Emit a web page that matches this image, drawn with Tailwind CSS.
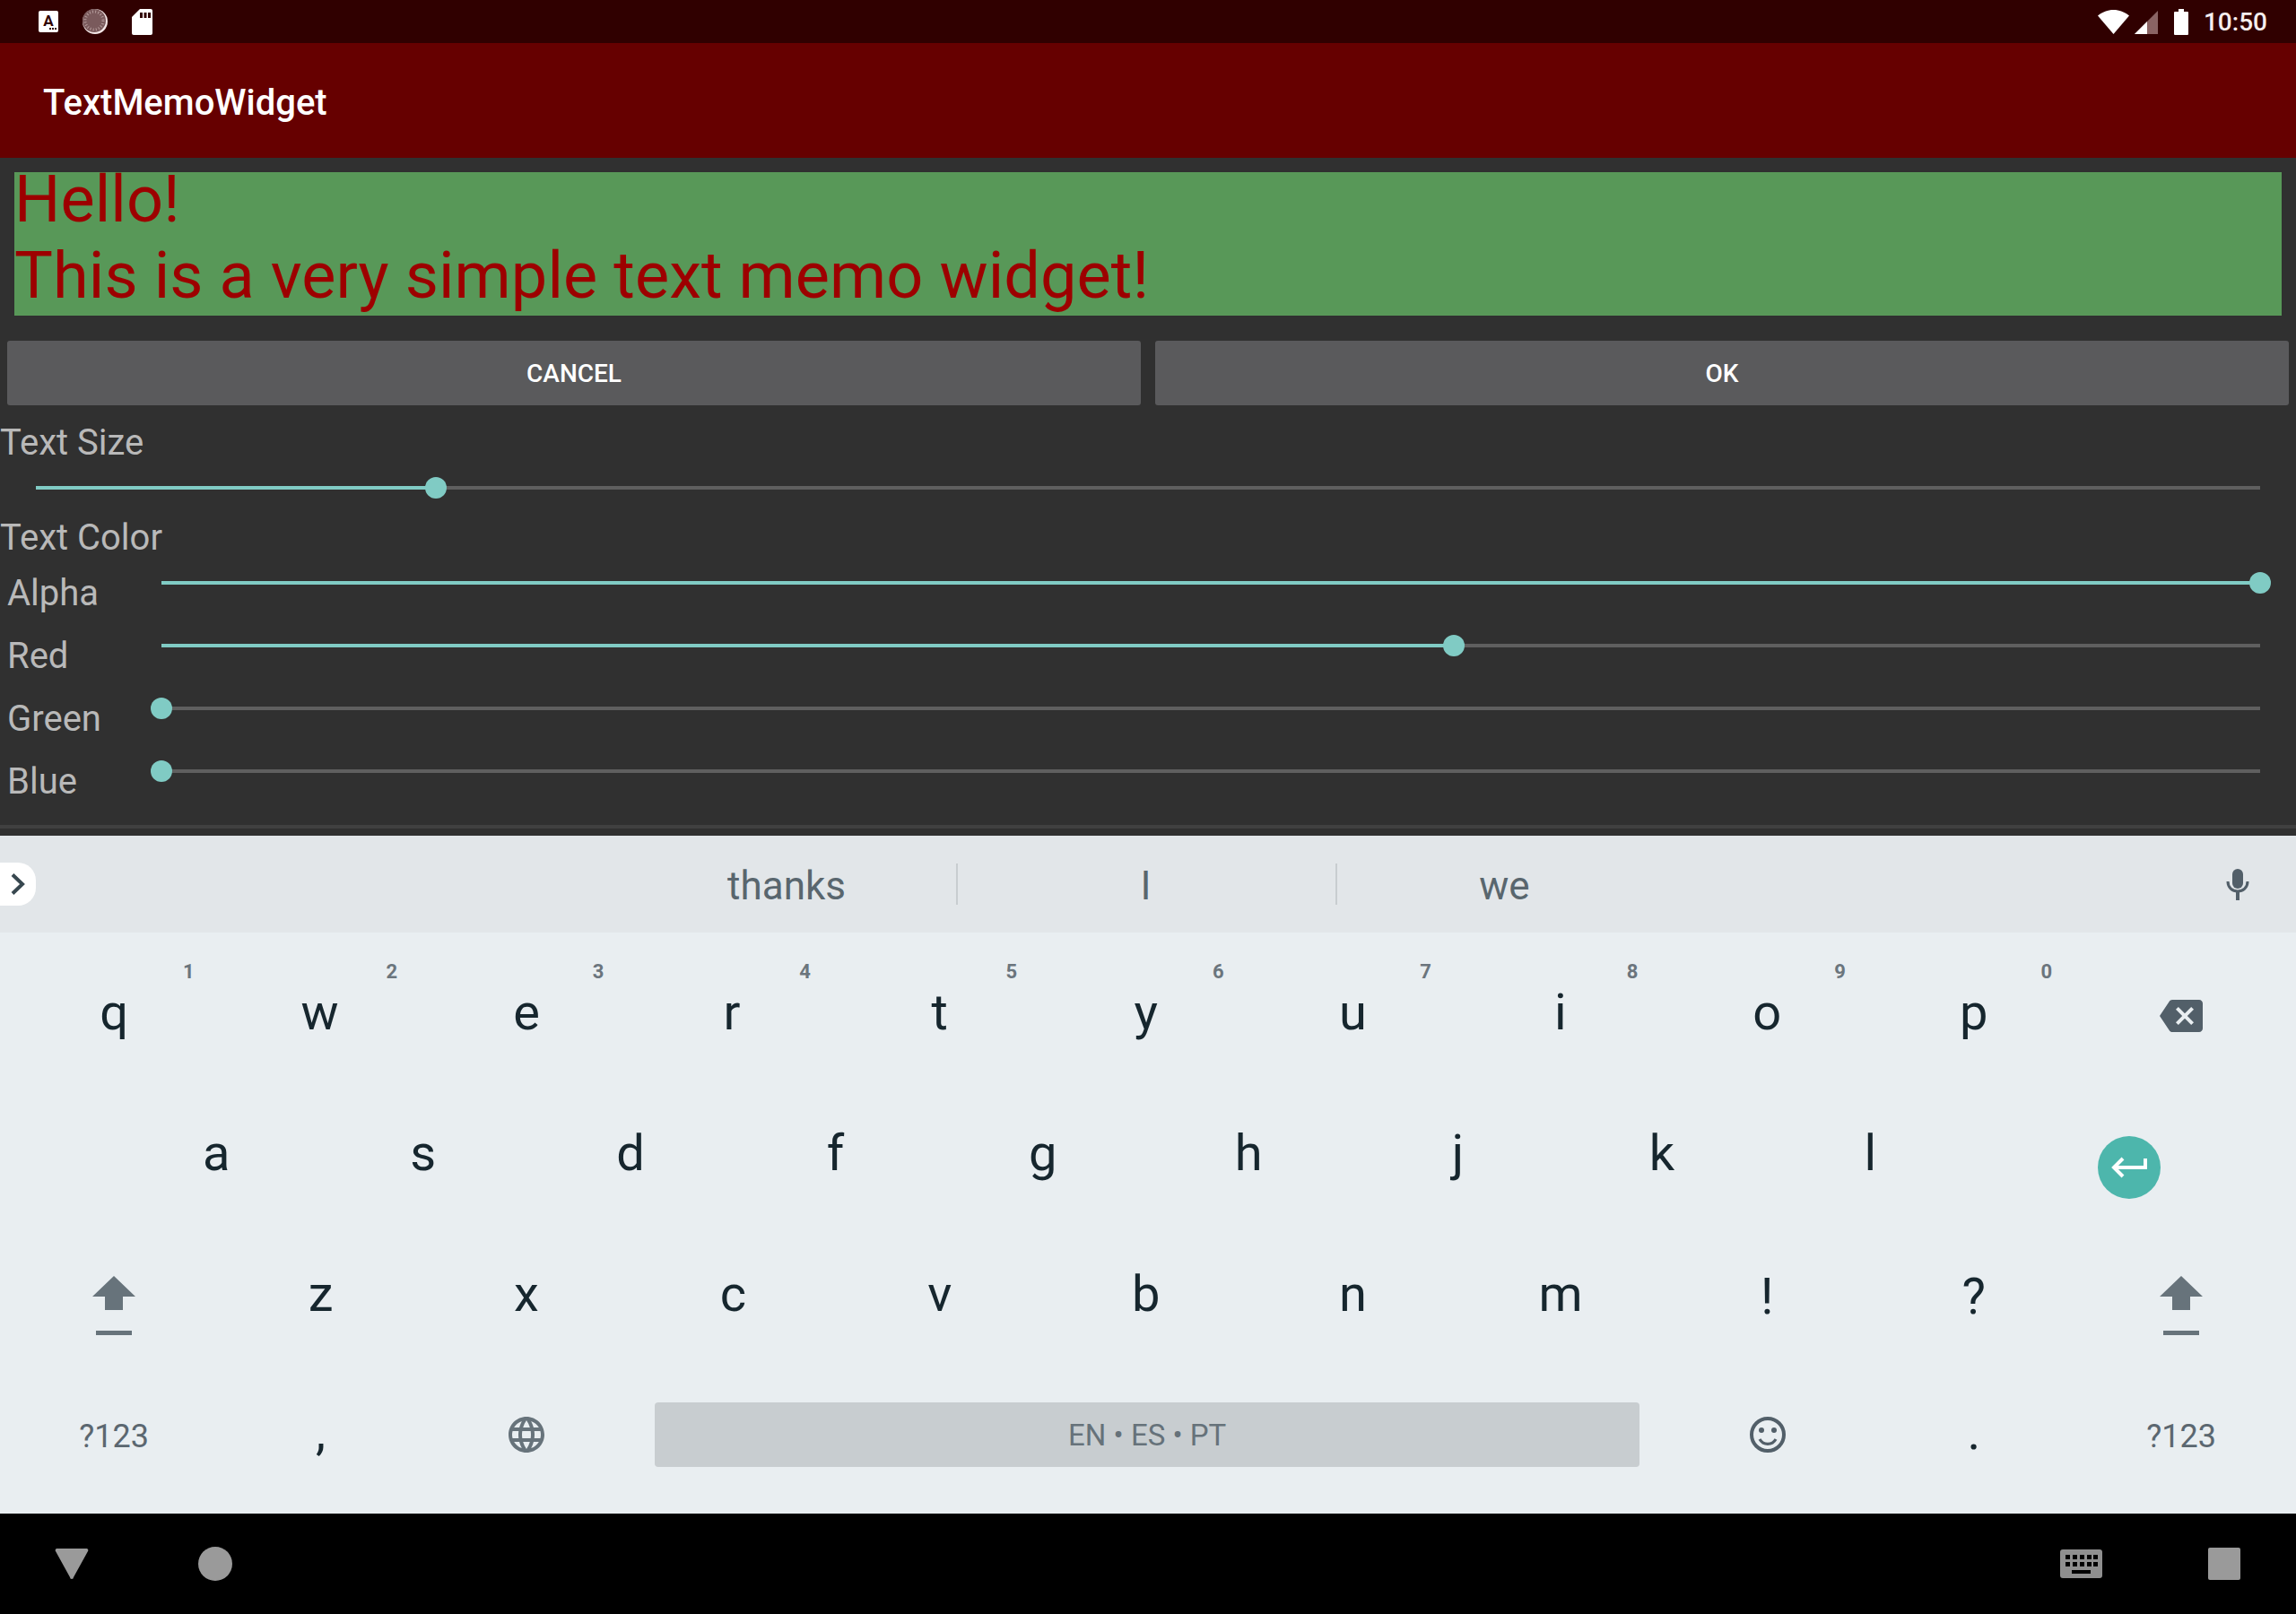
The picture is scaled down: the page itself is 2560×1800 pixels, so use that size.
<!DOCTYPE html>
<html lang="en">
<head>
    <meta charset="UTF-8">
    <title>TextMemoWidget</title>
    <script src="https://cdn.jsdelivr.net/npm/@tailwindcss/browser@4"></script>
</head>
<body class="bg-[#303030] font-['Roboto',sans-serif]">
<div class="w-[2560px] h-[1800px] flex flex-col overflow-hidden">
    <!-- status bar -->
    <div class="h-[48px] bg-[#300000] flex items-center relative">
        <svg class="ml-[43px] w-[22px] h-[24px]" viewBox="0 0 22 24"><rect width="22" height="24" rx="2" fill="#fff"/><text x="11" y="17" text-anchor="middle" font-family="Roboto" font-weight="700" font-size="17" fill="#300000">A</text><rect x="12" y="19" width="2" height="2" fill="#300000"/><rect x="15" y="19" width="2" height="2" fill="#300000"/><rect x="18" y="19" width="2" height="2" fill="#300000"/></svg>
        <svg class="ml-[27px] w-[28px] h-[28px]" viewBox="0 0 28 28"><circle cx="14" cy="14" r="14" fill="#f3e6e6"/><circle cx="13" cy="13" r="13" fill="#7a5a5c"/><circle cx="13" cy="13" r="10" fill="none" stroke="#b59c9c" stroke-width="3" stroke-dasharray="1 2.2"/></svg>
        <svg class="ml-[27px] w-[23px] h-[29px]" viewBox="0 0 23 29"><path d="M9 0h12a2 2 0 0 1 2 2v25a2 2 0 0 1-2 2H2a2 2 0 0 1-2-2V9z" fill="#fff"/><rect x="9" y="4" width="3" height="6" fill="#300000"/><rect x="13.5" y="4" width="3" height="6" fill="#300000"/><rect x="18" y="4" width="3" height="6" fill="#300000"/></svg>
        <svg class="ml-auto w-[35px] h-[27px]" viewBox="0 0 35 27"><path d="M17.5 27 0 6.5C5 2.500 11 0 17.500 0S30 2.500 35 6.500z" fill="#fff"/></svg>
        <svg class="ml-[6px] w-[26px] h-[26px] mt-[2px]" viewBox="0 0 26 26"><path d="M26 0v26H0z" fill="#8a6464"/><path d="M14 12v14H0z" fill="#fff"/></svg>
        <svg class="ml-[18px] w-[16px] h-[29px]" viewBox="0 0 16 29"><path d="M5 0h6v3h4a1 1 0 0 1 1 1v24a1 1 0 0 1-1 1H1a1 1 0 0 1-1-1V4a1 1 0 0 1 1-1h4z" fill="#fff"/></svg>
        <span class="ml-[17px] mr-[32px] mt-[2px] text-[28px] font-medium text-[#f5eeee] leading-none">10:50</span>
    </div>
    <!-- app bar -->
    <div class="h-[128px] bg-[#660000] flex items-center pl-[48px] pt-[6px] text-[40px] font-medium text-white">TextMemoWidget</div>

    <!-- content -->
    <div class="h-[756px] relative text-[40px] leading-[47px] text-[#b9b9b9]">
        <div class="mt-[16px] mx-[16px] h-[160px] flex flex-col bg-[#589858] text-[72px] leading-[85px] tracking-[0.1px] text-[#9d0000]">
            <div class="mt-[-12px]">Hello!<br>This is a very simple text memo widget!</div>
        </div>

        <div class="mt-[28px] px-[8px] flex gap-[16px]">
            <div class="flex-1 h-[72px] pt-[1px] bg-[#5a5a5c] rounded-[3px] flex items-center justify-center text-[28px] font-medium text-white">CANCEL</div>
            <div class="flex-1 h-[72px] pt-[1px] bg-[#5a5a5c] rounded-[3px] flex items-center justify-center text-[28px] font-medium text-white">OK</div>
        </div>

        <div class="mt-[18px]">Text Size</div>
        <div class="mt-[15px] ml-[40px] w-[2480px] h-[24px] relative flex items-center">
            <div class="w-[445px] h-[4px] bg-[#80cbc4]"></div>
            <div class="flex-1 h-[4px] bg-[#5f5f5f]"></div>
            <div class="absolute left-[434px] w-[24px] h-[24px] rounded-full bg-[#80cbc4]"></div>
        </div>

        <div class="mt-[20px]">Text Color</div>
        <div class="mt-[15px] flex flex-col">
            <div class="h-[70px] flex items-start pl-[8px]">
                <span class="w-[172px]">Alpha</span>
                <div class="w-[2340px] h-[24px] relative flex items-center">
                    <div class="flex-1 h-[4px] bg-[#80cbc4]"></div>
                    <div class="absolute left-[2328px] w-[24px] h-[24px] rounded-full bg-[#80cbc4]"></div>
                </div>
            </div>
            <div class="h-[70px] flex items-start pl-[8px]">
                <span class="w-[172px]">Red</span>
                <div class="w-[2340px] h-[24px] relative flex items-center">
                    <div class="w-[1441px] h-[4px] bg-[#80cbc4]"></div>
                    <div class="flex-1 h-[4px] bg-[#5f5f5f]"></div>
                    <div class="absolute left-[1429px] w-[24px] h-[24px] rounded-full bg-[#80cbc4]"></div>
                </div>
            </div>
            <div class="h-[70px] flex items-start pl-[8px]">
                <span class="w-[172px]">Green</span>
                <div class="w-[2340px] h-[24px] relative flex items-center">
                    <div class="flex-1 h-[4px] bg-[#5f5f5f]"></div>
                    <div class="absolute left-[-12px] w-[24px] h-[24px] rounded-full bg-[#80cbc4]"></div>
                </div>
            </div>
            <div class="h-[70px] flex items-start pl-[8px]">
                <span class="w-[172px]">Blue</span>
                <div class="w-[2340px] h-[24px] relative flex items-center">
                    <div class="flex-1 h-[4px] bg-[#5f5f5f]"></div>
                    <div class="absolute left-[-12px] w-[24px] h-[24px] rounded-full bg-[#80cbc4]"></div>
                </div>
            </div>
        </div>
        <div class="mt-[2px] h-[4px] bg-[#404040]"></div>
    </div>

    <!-- suggestion strip -->
    <div class="h-[108px] bg-[#e2e6e9] flex items-center text-[44px] text-[#59666e]">
        <div class="w-[40px] h-[48px] bg-white rounded-r-[20px] flex items-center justify-center">
            <svg class="w-[16px] h-[24px]" viewBox="0 0 16 24"><path d="M2 1.500 13 12 2 22.500" fill="none" stroke="#37474f" stroke-width="4"/></svg>
        </div>
        <div class="ml-[648px] w-[378px] text-center pt-[3px]">thanks</div>
        <div class="w-[2px] h-[46px] bg-[#c8cdd0]"></div>
        <div class="w-[421px] text-center pt-[3px] pr-[2px]">I</div>
        <div class="w-[2px] h-[46px] bg-[#c8cdd0]"></div>
        <div class="w-[378px] text-center pt-[3px] pr-[5px]">we</div>
        <svg class="ml-[613px] w-[26px] h-[35px]" viewBox="0 0 26 35"><rect x="7" y="0" width="12" height="22" rx="6" fill="#525f69"/><path d="M2 14c0 7 5 11 11 11s11-4 11-11" fill="none" stroke="#525f69" stroke-width="3"/><rect x="11" y="24" width="4" height="11" fill="#525f69"/></svg>
    </div>

    <!-- keyboard -->
    <div class="h-[648px] bg-[#e9eef1] pt-[10px] text-[56px] text-[#16262e]">
        <div class="h-[157px] flex pl-[12px]">
            <div class="w-[230.4px] relative flex items-center justify-center">q<span class="absolute left-[192px] top-[23px] text-[22px] leading-[22px] font-bold text-[#6b757d]">1</span></div>
            <div class="w-[230.4px] relative flex items-center justify-center pr-[2px]">w<span class="absolute left-[188px] top-[23px] text-[22px] leading-[22px] font-bold text-[#6b757d]">2</span></div>
            <div class="w-[230.4px] relative flex items-center justify-center pr-[2px]">e<span class="absolute left-[188px] top-[23px] text-[22px] leading-[22px] font-bold text-[#6b757d]">3</span></div>
            <div class="w-[230.4px] relative flex items-center justify-center pr-[5px]">r<span class="absolute left-[188px] top-[23px] text-[22px] leading-[22px] font-bold text-[#6b757d]">4</span></div>
            <div class="w-[230.4px] relative flex items-center justify-center pr-[2px]">t<span class="absolute left-[188px] top-[23px] text-[22px] leading-[22px] font-bold text-[#6b757d]">5</span></div>
            <div class="w-[230.4px] relative flex items-center justify-center pr-[3px]">y<span class="absolute left-[188px] top-[23px] text-[22px] leading-[22px] font-bold text-[#6b757d]">6</span></div>
            <div class="w-[230.4px] relative flex items-center justify-center pr-[2px]">u<span class="absolute left-[189px] top-[23px] text-[22px] leading-[22px] font-bold text-[#6b757d]">7</span></div>
            <div class="w-[230.4px] relative flex items-center justify-center">i<span class="absolute left-[189px] top-[23px] text-[22px] leading-[22px] font-bold text-[#6b757d]">8</span></div>
            <div class="w-[230.4px] relative flex items-center justify-center">o<span class="absolute left-[190px] top-[23px] text-[22px] leading-[22px] font-bold text-[#6b757d]">9</span></div>
            <div class="w-[230.4px] relative flex items-center justify-center">p<span class="absolute left-[190px] top-[23px] text-[22px] leading-[22px] font-bold text-[#6b757d]">0</span></div>
            <div class="w-[230.4px] flex items-center justify-center pl-[1px]">
                <svg class="mt-[9px] w-[48px] h-[36px]" viewBox="0 3 24 18"><path fill="#525f69" d="M22 3H7c-.69 0-1.230.35-1.590.88L0 12l5.410 8.110c.36.53.9.89 1.590.89h15c1.100 0 2-.9 2-2V5c0-1.100-.9-2-2-2zm-3 12.590L17.590 17 14 13.410 10.410 17 9 15.590 12.590 12 9 8.410 10.410 7 14 10.590 17.590 7 19 8.410 15.410 12 19 15.590z"/></svg>
            </div>
        </div>
        <div class="h-[157px] flex pl-[127px]">
            <div class="w-[230.4px] flex items-center justify-center pr-[2px]">a</div>
            <div class="w-[230.4px] flex items-center justify-center pr-[2px]">s</div>
            <div class="w-[230.4px] flex items-center justify-center">d</div>
            <div class="w-[230.4px] flex items-center justify-center pr-[4px]">f</div>
            <div class="w-[230.4px] flex items-center justify-center pr-[2px]">g</div>
            <div class="w-[230.4px] flex items-center justify-center pr-[4px]">h</div>
            <div class="w-[230.4px] flex items-center justify-center pl-[2px]">j</div>
            <div class="w-[230.4px] flex items-center justify-center pr-[4px]">k</div>
            <div class="w-[230.4px] flex items-center justify-center">l</div>
            <div class="w-[348px] flex items-center justify-center pr-[2px]">
                <div class="mt-[32px] w-[70px] h-[70px] rounded-full bg-[#4db6ac] flex items-center justify-center">
                    <svg class="w-[40px] h-[26px]" viewBox="0 0 40 26"><path d="M38 3v10H4M13 3 3 13l10 10" fill="none" stroke="#fff" stroke-width="4"/></svg>
                </div>
            </div>
        </div>
        <div class="h-[157px] flex pl-[12px]">
            <div class="w-[230.4px] flex items-center justify-center">
                <svg class="mt-[27px] w-[48px] h-[66px]" viewBox="0 0 48 66"><path d="M24 0 48 23H34V38H14V23H0z" fill="#67737b"/><rect x="4" y="61" width="40" height="5" fill="#67737b"/></svg>
            </div>
            <div class="w-[230.4px] flex items-center justify-center">z</div>
            <div class="w-[230.4px] flex items-center justify-center pr-[2px]">x</div>
            <div class="w-[230.4px] flex items-center justify-center pr-[2px]">c</div>
            <div class="w-[230.4px] flex items-center justify-center pr-[2px]">v</div>
            <div class="w-[230.4px] flex items-center justify-center pr-[3px]">b</div>
            <div class="w-[230.4px] flex items-center justify-center pr-[2px]">n</div>
            <div class="w-[230.4px] flex items-center justify-center">m</div>
            <div class="w-[230.4px] flex items-center justify-center pt-[7px]">!</div>
            <div class="w-[230.4px] flex items-center justify-center pt-[7px]">?</div>
            <div class="w-[230.4px] flex items-center justify-center pl-[1px]">
                <svg class="mt-[27px] w-[48px] h-[66px]" viewBox="0 0 48 66"><path d="M24 0 48 23H34V38H14V23H0z" fill="#67737b"/><rect x="4" y="61" width="40" height="5" fill="#67737b"/></svg>
            </div>
        </div>
        <div class="h-[157px] flex pl-[12px]">
            <div class="w-[230.4px] flex items-center justify-center pt-[5px] text-[36px] text-[#5b6770]">?123</div>
            <div class="w-[230.4px] flex items-center justify-center pb-[5px]">,</div>
            <div class="w-[230.4px] flex items-center justify-center pr-[2px]">
                <svg class="w-[48px] h-[48px]" viewBox="0 0 24 24"><path fill="#67737b" d="M11.990 2C6.470 2 2 6.480 2 12s4.470 10 9.990 10C17.520 22 22 17.520 22 12S17.520 2 11.990 2zm6.930 6h-2.950c-.32-1.250-.78-2.450-1.380-3.560 1.840.63 3.370 1.910 4.330 3.560zM12 4.040c.83 1.200 1.480 2.530 1.910 3.960h-3.820c.43-1.430 1.080-2.760 1.910-3.960zM4.260 14C4.100 13.360 4 12.690 4 12s.1-1.360.26-2h3.380c-.08.66-.14 1.320-.14 2 0 .68.06 1.340.14 2H4.260zm.82 2h2.950c.32 1.250.78 2.450 1.380 3.560-1.840-.63-3.370-1.900-4.330-3.560zm2.950-8H5.080c.96-1.660 2.490-2.930 4.330-3.560C8.810 5.550 8.350 6.750 8.030 8zM12 19.960c-.83-1.200-1.480-2.530-1.910-3.960h3.820c-.43 1.430-1.080 2.760-1.910 3.960zM14.340 14H9.660c-.09-.66-.16-1.320-.16-2 0-.68.07-1.350.16-2h4.680c.09.65.16 1.320.16 2 0 .68-.07 1.340-.16 2zm.25 5.560c.6-1.110 1.060-2.310 1.380-3.560h2.950c-.96 1.650-2.490 2.930-4.330 3.560zM16.360 14c.08-.66.14-1.320.14-2 0-.68-.06-1.340-.14-2h3.380c.16.64.26 1.310.26 2s-.1 1.360-.26 2h-3.380z"/></svg>
            </div>
            <div class="w-[1152px] flex items-center px-[27px]">
                <div class="w-full h-[72px] pt-[2px] rounded-[4px] bg-[#c8cdd0] flex items-center justify-center text-[33px] text-[#66727a]">EN • ES • PT</div>
            </div>
            <div class="w-[230.4px] flex items-center justify-center pl-[1px]">
                <svg class="w-[48px] h-[48px]" viewBox="0 0 24 24"><circle cx="12" cy="12" r="9" fill="none" stroke="#525f69" stroke-width="2"/><circle cx="8.500" cy="9.500" r="1.500" fill="#525f69"/><circle cx="15.500" cy="9.500" r="1.500" fill="#525f69"/><path d="M7.500 14.500c1 1.800 2.600 2.700 4.500 2.700s3.500-.9 4.500-2.700" fill="none" stroke="#525f69" stroke-width="1.600"/></svg>
            </div>
            <div class="w-[230.4px] flex items-center justify-center pb-[5px]">.</div>
            <div class="w-[230.4px] flex items-center justify-center pt-[5px] pl-[2px] text-[36px] text-[#5b6770]">?123</div>
        </div>
    </div>

    <!-- nav bar -->
    <div class="h-[112px] bg-black flex items-center relative">
        <svg class="ml-[61px] w-[38px] h-[34px]" viewBox="0 0 38 34"><path d="M3 0h32a2 2 0 0 1 2 3L21 32a2 2 0 0 1-4 0L1 3a2 2 0 0 1 2-3z" fill="#9a9a9a"/></svg>
        <div class="ml-[122px] w-[38px] h-[38px] rounded-full bg-[#9a9a9a]"></div>
        <svg class="ml-auto w-[47px] h-[32px]" viewBox="0 0 47 32"><rect width="47" height="32" rx="3" fill="#8f8f8f"/><g fill="#000"><rect x="6" y="6" width="5" height="5"/><rect x="14" y="6" width="5" height="5"/><rect x="22" y="6" width="5" height="5"/><rect x="30" y="6" width="5" height="5"/><rect x="37" y="6" width="5" height="5"/><rect x="6" y="14" width="5" height="5"/><rect x="14" y="14" width="5" height="5"/><rect x="22" y="14" width="5" height="5"/><rect x="30" y="14" width="5" height="5"/><rect x="37" y="14" width="5" height="5"/><rect x="13" y="23" width="21" height="4"/></g></svg>
        <div class="ml-[118px] mr-[62px] w-[36px] h-[36px] rounded-[2px] bg-[#9a9a9a]"></div>
    </div>
</div>
</body>
</html>
